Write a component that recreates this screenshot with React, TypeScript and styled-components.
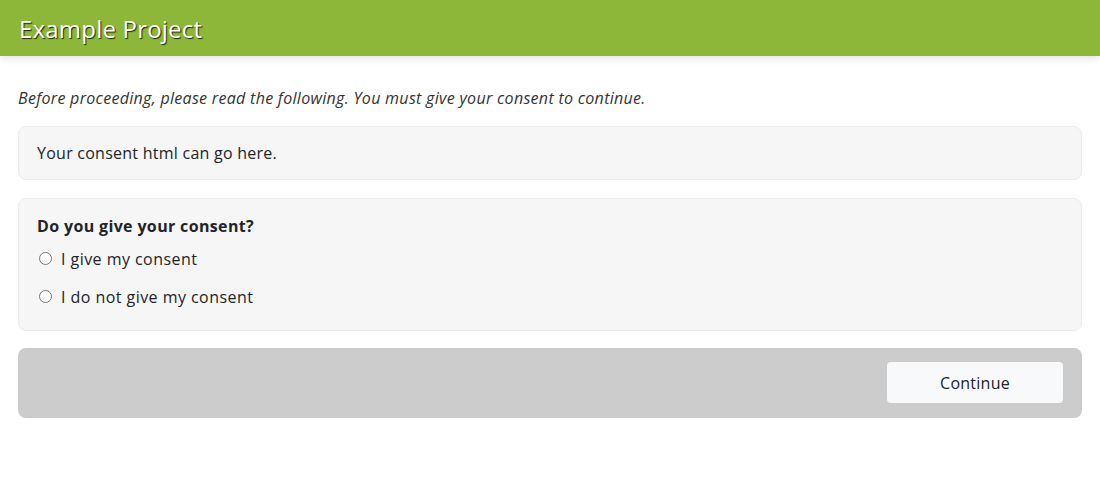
import React from "react";
import styled, { createGlobalStyle } from "styled-components";

const Global = createGlobalStyle`
  html, body { margin: 0; padding: 0; background: #fff; }
  body { font-family: "Open Sans", "Noto Sans", sans-serif; color: #212529; font-size: 16px; }
  * { box-sizing: border-box; }
`;

const Header = styled.header`
  height: 56px;
  background: #8cb738;
  display: flex;
  align-items: center;
  padding: 0 19px;
  box-shadow: 0 2px 8px rgba(0, 0, 0, 0.12);
`;

const Title = styled.h1`
  margin: 0;
  font-size: 24px;
  font-weight: 400;
  color: #fff;
  text-shadow: 1px 1px 1px rgba(0, 0, 0, 0.8);
  letter-spacing: 0.2px;
`;

const Main = styled.main`
  padding: 30px 18px 0;
  display: flex;
  flex-direction: column;
`;

const Intro = styled.p`
  margin: 0 0 16px;
  font-style: italic;
  font-size: 16px;
  color: #333;
  letter-spacing: 0.3px;
  line-height: 24px;
`;

const Well = styled.div<{ $pad: string; $mb: number }>`
  background: #f6f6f6;
  border: 1px solid #ebebeb;
  border-radius: 8px;
  padding: ${(p) => p.$pad};
  margin-bottom: ${(p) => p.$mb}px;
  letter-spacing: 0.25px;
  line-height: 24px;
`;

const Question = styled.div`
  font-weight: 700;
  margin-bottom: 9px;
  letter-spacing: 0.35px;
`;

const RadioRow = styled.label`
  display: flex;
  align-items: center;
  gap: 9px;
  margin-bottom: 14px;
  letter-spacing: 0.45px;
  &:last-child { margin-bottom: 0; }
`;

const Radio = styled.input`
  margin: 0 0 2px 2px;
  width: 13px;
  height: 13px;
`;

const Footer = styled.div`
  background: #cccccc;
  border-radius: 8px;
  padding: 14px 19px 15px;
  display: flex;
  justify-content: flex-end;
`;

const Button = styled.button`
  width: 176px;
  height: 41px;
  background: #f8f9fa;
  border: none;
  border-radius: 4px;
  font-family: inherit;
  font-size: 16px;
  color: #212529;
  letter-spacing: 0.25px;
`;

export default function App() {
  return (
    <>
      <Global />
      <Header>
        <Title>Example Project</Title>
      </Header>
      <Main>
        <Intro>Before proceeding, please read the following. You must give your consent to continue.</Intro>
        <Well $pad="14px 18px" $mb={18}>Your consent html can go here.</Well>
        <Well $pad="15px 18px 21px" $mb={17}>
          <Question>Do you give your consent?</Question>
          <RadioRow>
            <Radio type="radio" name="consent" /> I give my consent
          </RadioRow>
          <RadioRow>
            <Radio type="radio" name="consent" /> I do not give my consent
          </RadioRow>
        </Well>
        <Footer>
          <Button>Continue</Button>
        </Footer>
      </Main>
    </>
  );
}
